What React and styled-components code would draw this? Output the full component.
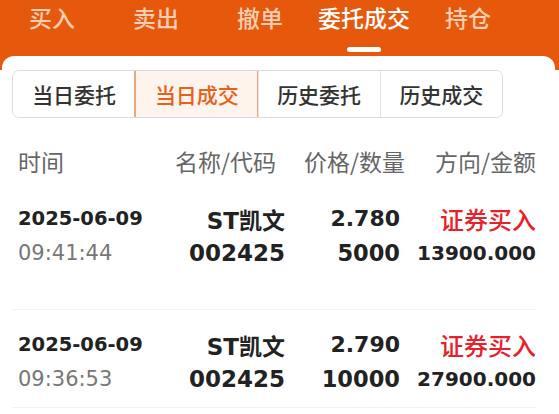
import React from "react";
import styled, { createGlobalStyle } from "styled-components";

const GlobalStyle = createGlobalStyle`
  * { box-sizing: border-box; }
  body {
    margin: 0;
    background: #fff;
    font-family: "Noto Sans CJK SC", "Noto Sans", sans-serif;
  }
`;

const Screen = styled.div`
  width: 559px;
  height: 414px;
  overflow: hidden;
  background: linear-gradient(#e6580b 0 70px, #fff 70px);
`;

const TopNav = styled.nav`
  height: 56px;
  display: flex;
`;

const NavTab = styled.div`
  width: 104px;
  flex-shrink: 0;
  display: flex;
  flex-direction: column;
  align-items: center;
  font-size: 23px;
  font-weight: 500;
  line-height: 34px;
  white-space: nowrap;
  color: ${(p) => (p.$active ? "#fff" : "#f8cdb3")};
`;

const Indicator = styled.span`
  width: 34px;
  height: 5px;
  margin-top: 13px;
  border-radius: 3px;
  background: #fff;
`;

const Card = styled.section`
  margin: 0 4px 0 2px;
  height: 358px;
  background: #fff;
  border-radius: 12px 12px 0 0;
  padding: 14px 19px 0 10px;
`;

const Segment = styled.div`
  width: 491px;
  height: 48px;
  display: grid;
  grid-template-columns: repeat(4, 1fr);
  border: 1px solid #dcdcdc;
  border-radius: 7px;
  overflow: hidden;
`;

const SegItem = styled.div`
  display: flex;
  align-items: center;
  justify-content: center;
  font-size: 21px;
  font-weight: 500;
  color: ${(p) => (p.$active ? "#e8601a" : "#333")};
  background: ${(p) => (p.$active ? "#fef3ed" : "#fff")};
  border-left: 1px solid ${(p) => (p.$active ? "#e9a784" : "#e3e3e3")};
  box-shadow: ${(p) => (p.$active ? "inset -1px 0 0 #e9a784, 0 0 0 1px #e9a784" : "none")};
  &:first-child { border-left: none; }
`;

const Grid = styled.div`
  display: grid;
  grid-template-columns: 130px 137px 120px 1fr;
  padding-left: 6px;
  align-items: center;
`;

const HeadRow = styled(Grid)`
  margin-top: 26px;
  height: 30px;
  font-size: 23px;
  color: #666;
`;

const HeadCell = styled.div`
  text-align: ${(p) => (p.$left ? "left" : "right")};
  padding-right: ${(p) => p.$shift || 0}px;
  white-space: nowrap;
`;

const List = styled.div`
  margin-top: 10px;
  display: flex;
  flex-direction: column;
  gap: 28px;
`;

const Record = styled.div`
  padding: 17px 0 14px;
  display: flex;
  flex-direction: column;
  gap: 10px;
  & + & { border-top: 1px solid #f1f1f1; }
  &:last-child { border-bottom: 1px solid #f1f1f1; }
`;

const Line = styled(Grid)`
  height: 28px;
  font-family: "DejaVu Sans", "Noto Sans CJK SC", sans-serif;
  white-space: nowrap;
`;

const Cell = styled.div`
  text-align: right;
  font-weight: 700;
  font-size: ${(p) => p.$size || 22}px;
  color: #222;
  padding-right: ${(p) => p.$shift || 0}px;
`;

const DateText = styled.div`
  font-size: 19.5px;
  font-weight: 700;
  color: #222;
`;

const TimeText = styled.div`
  font-size: 21px;
  color: #777;
`;

const Direction = styled.div`
  text-align: right;
  font-family: "Noto Sans CJK SC", sans-serif;
  font-size: 24px;
  font-weight: 500;
  color: #e8202a;
`;

const tabs = ["买入", "卖出", "撤单", "委托成交", "持仓"];
const segs = ["当日委托", "当日成交", "历史委托", "历史成交"];
const trades = [
  { date: "2025-06-09", time: "09:41:44", name: "ST凯文", code: "002425", price: "2.780", qty: "5000", amount: "13900.000" },
  { date: "2025-06-09", time: "09:36:53", name: "ST凯文", code: "002425", price: "2.790", qty: "10000", amount: "27900.000" },
];

export default function App() {
  return (
    <Screen>
      <GlobalStyle />
      <TopNav>
        {tabs.map((t, i) => (
          <NavTab key={t} $active={i === 3}>
            {t}
            {i === 3 && <Indicator />}
          </NavTab>
        ))}
      </TopNav>
      <Card>
        <Segment>
          {segs.map((s, i) => (
            <SegItem key={s} $active={i === 1}>{s}</SegItem>
          ))}
        </Segment>
        <HeadRow>
          <HeadCell $left>时间</HeadCell>
          <HeadCell $shift={9}>名称/代码</HeadCell>
          <HeadCell>价格/数量</HeadCell>
          <HeadCell>方向/金额</HeadCell>
        </HeadRow>
        <List>
          {trades.map((r) => (
            <Record key={r.time}>
              <Line>
                <DateText>{r.date}</DateText>
                <Cell $size={23}>{r.name}</Cell>
                <Cell $shift={5}>{r.price}</Cell>
                <Direction>证券买入</Direction>
              </Line>
              <Line>
                <TimeText>{r.time}</TimeText>
                <Cell $size={23}>{r.code}</Cell>
                <Cell $size={22.5} $shift={5}>{r.qty}</Cell>
                <Cell $size={20}>{r.amount}</Cell>
              </Line>
            </Record>
          ))}
        </List>
      </Card>
    </Screen>
  );
}
